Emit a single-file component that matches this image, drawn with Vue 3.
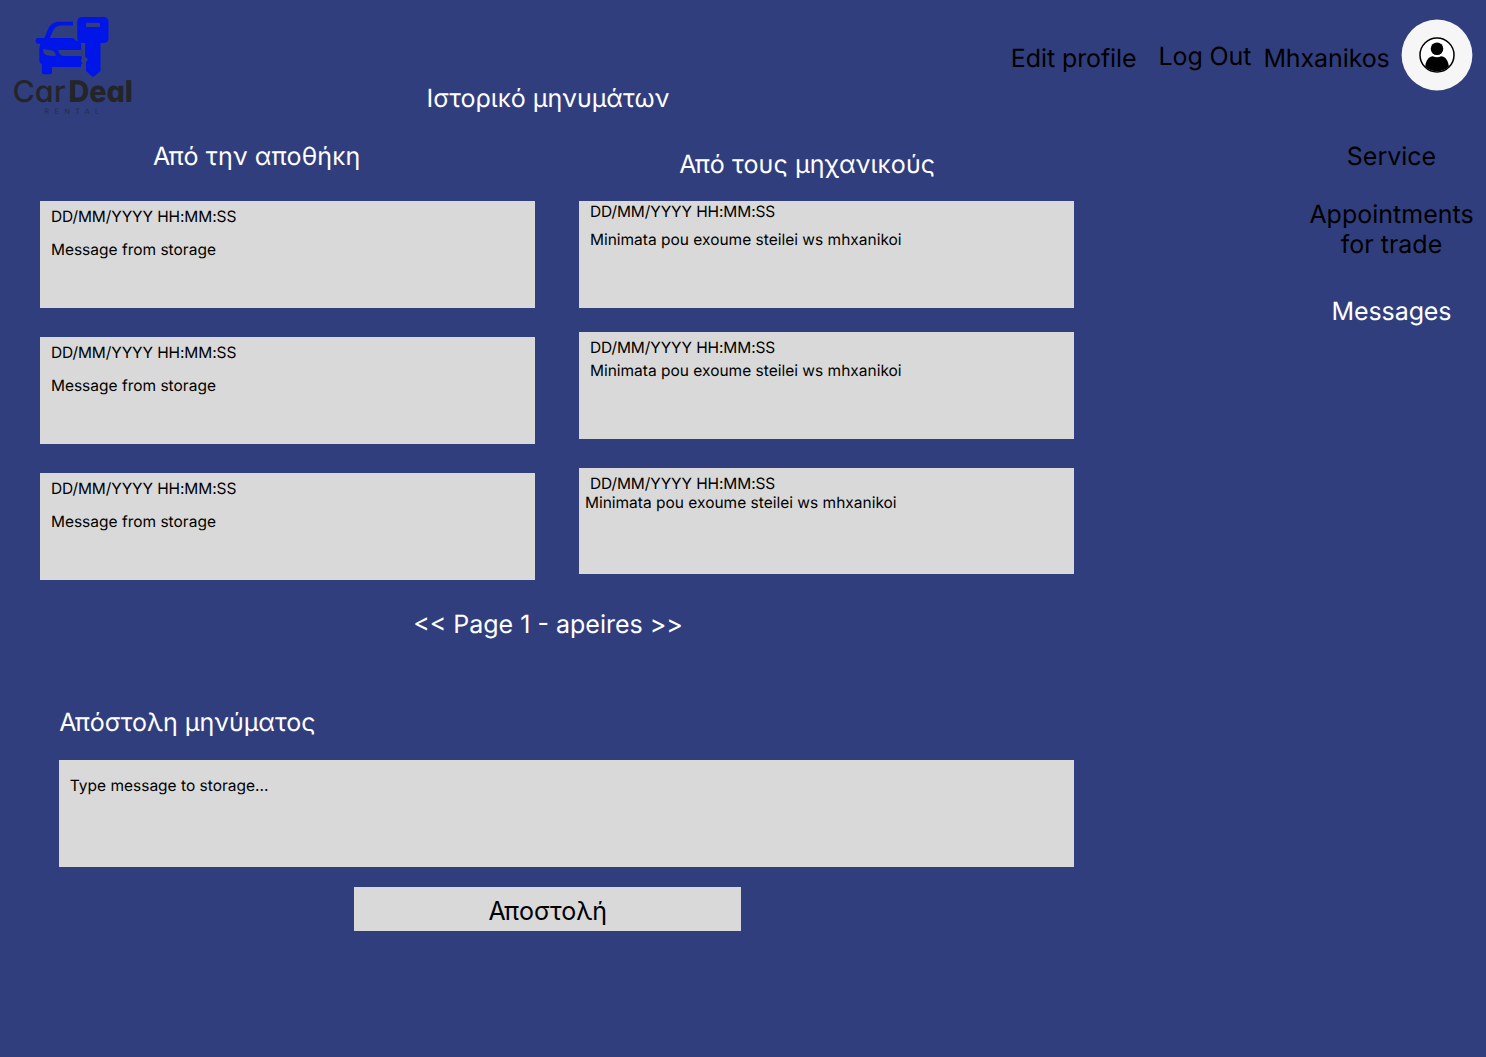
<script setup>
const storage = [
  { date: 'DD/MM/YYYY HH:MM:SS', text: 'Message from storage' },
  { date: 'DD/MM/YYYY HH:MM:SS', text: 'Message from storage' },
  { date: 'DD/MM/YYYY HH:MM:SS', text: 'Message from storage' },
]
const mechanics = [
  { kind: 'roomy', date: 'DD/MM/YYYY HH:MM:SS', text: 'Minimata pou exoume steilei ws mhxanikoi' },
  { kind: 'snug', date: 'DD/MM/YYYY HH:MM:SS', text: 'Minimata pou exoume steilei ws mhxanikoi' },
  { kind: 'tight', date: 'DD/MM/YYYY HH:MM:SS', text: 'Minimata pou exoume steilei ws mhxanikoi' },
]
</script>

<template>
  <div class="page">
    <header class="top">
      <svg class="logo" width="150" height="125" viewBox="0 0 150 125">
        <g fill="#0015e8">
          <path d="M73 21.800v3.600H61c-4 .2-6.300 1.800-8 5.300L49.700 38H73c1.500 1.600 3 2.700 5 3.200 2.400.5 3.200 1.300 3.200 3.600v10.800l.8 2.700-1.300 2.700 1.800 2.500-1.600 1.500v2.100H52v5.200c0 1.300-.8 2-2 2h-6c-1.500 0-2.200-.8-2.200-2.200v-7.600c-1.700-1.200-2.500-2.700-2.500-4.800v-9.500c0-2.700.4-4.700 1.200-6.500h-2.700c-3 0-3-5.600 0-5.600h6.700L48 29c2.600-4.900 6-7.200 11.600-7.200z" />
          <path d="M82.300 17h21.500c3 0 4.700 1.800 4.700 4.700v16.500c0 3.300-1.800 4.900-5 4.900h-3v28L94 76.500h-2L86.100 71v-8.800l2-3-3-2.700V43.100h-3c-3.100 0-4.800-1.700-4.800-4.900V21.700c0-3 1.800-4.700 5-4.700z" />
        </g>
        <g fill="#313e7d">
          <rect x="86" y="22.700" width="14" height="4.300" rx=".8" />
          <path d="M43.300 49l8.700 1.500c2.500.6 3.700 2.300 3.700 5.300-4.500.5-8.500.2-10.900-1.500-1.500-1.200-1.800-3.500-1.500-5.300z" />
          <path d="M58 49.900h23.200v6H64.500c-3.700 0-5-1.300-6.500-6z" />
        </g>
        <text class="word thin" x="12.500" y="101.700" textLength="53" lengthAdjust="spacingAndGlyphs">Car</text>
        <text class="word bold" x="68.500" y="101.700" textLength="64.500" lengthAdjust="spacingAndGlyphs">Deal</text>
        <text class="rental" x="44.300" y="114.200" textLength="55" lengthAdjust="spacing">RENTAL</text>
      </svg>
      <nav class="account">
        <a class="edit">Edit profile</a>
        <a class="logout">Log Out</a>
        <span class="user">Mhxanikos</span>
        <svg class="avatar" width="72" height="72" viewBox="0 0 72 72">
          <circle cx="36" cy="36" r="35.400" fill="#f6f6f6" />
          <circle cx="36" cy="36" r="17" fill="#fff" stroke="#000" stroke-width="1.500" />
          <circle cx="36" cy="29.700" r="6.300" />
          <path d="M24.200 47.500c.6-6.500 4-10.300 7.700-10.300 2.500 1.400 5.600 1.400 8.200 0 3.800 0 7.200 3.800 7.800 10.300A17 17 0 0 1 24.200 47.500z" />
        </svg>
      </nav>
    </header>

    <div class="body">
      <main>
        <h1>Ιστορικό μηνυμάτων</h1>
        <div class="columns">
          <section class="column left">
            <h2>Από την αποθήκη</h2>
            <article v-for="(m, i) in storage" :key="i" class="card">
              <p class="date">{{ m.date }}</p>
              <p>{{ m.text }}</p>
            </article>
          </section>
          <section class="column right">
            <h2>Από τους μηχανικούς</h2>
            <article v-for="m in mechanics" :key="m.kind" class="card" :class="m.kind">
              <p class="date">{{ m.date }}</p>
              <p>{{ m.text }}</p>
            </article>
          </section>
        </div>
        <div class="pager">&lt;&lt; Page 1 - apeires &gt;&gt;</div>
        <section class="compose">
          <h2>Απόστολη μηνύματος</h2>
          <div class="field">Type message to storage...</div>
          <button type="button">Αποστολή</button>
        </section>
      </main>
      <aside>
        <a>Service</a>
        <a class="trade">Appointments<br />for trade</a>
        <a class="active">Messages</a>
      </aside>
    </div>
  </div>
</template>

<style>
body {
  margin: 0;
  background: #313e7d;
}
</style>

<style scoped>
.page {
  width: 1486px;
  height: 1057px;
  overflow: hidden;
  background: #313e7d;
  color: #000;
  font: 400 25px/30px Inter, "Noto Sans", sans-serif;
  text-rendering: geometricPrecision;
}
h1, h2, p {
  margin: 0;
  font-weight: 400;
  font-size: inherit;
}
.top {
  display: flex;
  justify-content: space-between;
  align-items: flex-start;
  height: 84px;
}
.logo {
  flex: none;
  overflow: visible;
}
.word {
  fill: #242529;
  font-family: Inter, sans-serif;
  font-feature-settings: "cv11";
}
.thin { font-size: 30px; font-weight: 500; }
.bold { font-size: 30px; font-weight: 800; }
.rental { font-size: 7.500px; fill: #272c4c; }
.account {
  display: flex;
  align-items: flex-start;
  white-space: nowrap;
  padding-right: 12.800px;
  letter-spacing: -.1px;
}
.edit { margin: 44px 22px 0 0; }
.logout { margin: 42px 12px 0 0; }
.user { margin: 44px 11.500px 0 0; }
.avatar { margin-top: 19px; }
.body {
  display: flex;
  justify-content: space-between;
}
main {
  width: 1074px;
  color: #fff;
}
h1 {
  padding-left: 22px;
  text-align: center;
}
.columns {
  display: flex;
  gap: 44.400px;
  padding: 28px 0 0 40.400px;
}
.column {
  width: 494.600px;
}
.column h2 {
  text-align: center;
  letter-spacing: .12px;
}
.left h2 {
  padding-right: 62px;
  margin-bottom: 29.400px;
}
.right h2 {
  padding: 8px 39px 0 0;
  margin-bottom: 21.400px;
}
.card {
  box-sizing: border-box;
  height: 106.600px;
  padding: 5.600px 10.500px;
  background: #d9d9d9;
  color: #000;
  font-size: 15.500px;
  line-height: 19px;
}
.date { letter-spacing: -.1px; }
.card + .card { margin-top: 29.200px; }
.card p + p { margin-top: 14.300px; }
.card.roomy { padding-top: .6px; }
.card.roomy p + p { margin-top: 9px; }
.card.roomy + .card { margin-top: 24px; }
.card.snug p + p { margin-top: 4px; }
.card.tight { padding-top: 6px; }
.card.tight p + p { margin: .5px 0 0 -5px; }
.pager {
  margin-top: 30.500px;
  padding-left: 22px;
  text-align: center;
}
.compose {
  display: flex;
  flex-direction: column;
  margin: 68px 0 0 59.300px;
}
.field {
  box-sizing: border-box;
  height: 106.600px;
  margin-top: 22px;
  padding: 16px 10.500px;
  background: #d9d9d9;
  color: #000;
  font-size: 15.500px;
  line-height: 19px;
}
button {
  width: 386.500px;
  height: 43.900px;
  margin: 20.600px 0 0 295.200px;
  padding: 3px 0 0;
  border: 0;
  background: #d9d9d9;
  color: #000;
  font: inherit;
}
aside {
  display: flex;
  flex-direction: column;
  width: 189px;
  padding-top: 58px;
  text-align: center;
}
.trade { margin: 28px 0 37px; }
.active { color: #fff; letter-spacing: -.1px; }
</style>
